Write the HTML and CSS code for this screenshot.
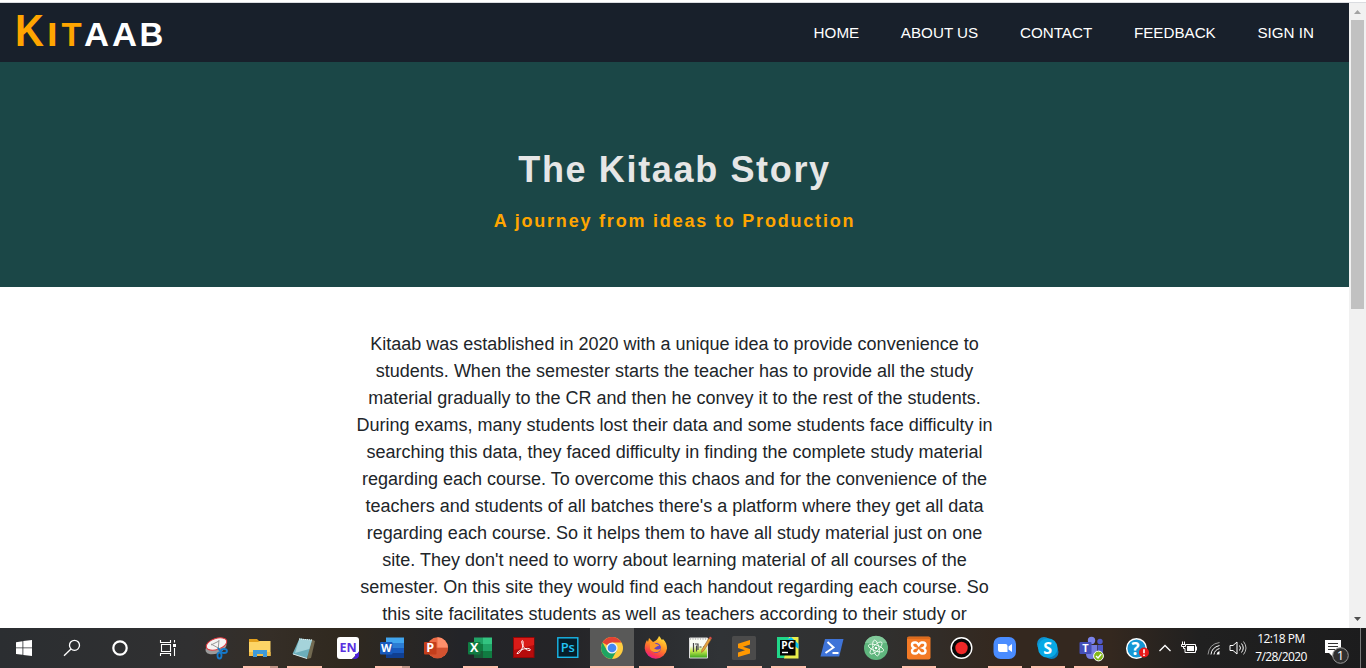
FILE: index.html
```html
<!DOCTYPE html>
<html lang="en">
<head>
<meta charset="utf-8">
<title>Kitaab</title>
<link rel="stylesheet" href="styles.css">
</head>
<body>
<div class="screen">
  <div class="window">
    <div class="page">
      <header class="navbar">
        <div class="logo"><span class="big gold">K</span><span class="gold l-i">I</span><span class="gold l-t">T</span><span>A</span><span>A</span><span class="l-b">B</span></div>
        <nav class="links"><a>HOME</a><a>ABOUT US</a><a>CONTACT</a><a>FEEDBACK</a><a>SIGN IN</a></nav>
      </header>
      <section class="hero">
        <h1>The Kitaab Story</h1>
        <h2>A journey from ideas to Production</h2>
      </section>
      <p class="story">Kitaab was established in 2020 with a unique idea to provide convenience to<br>students. When the semester starts the teacher has to provide all the study<br>material gradually to the CR and then he convey it to the rest of the students.<br>During exams, many students lost their data and some students face difficulty in<br>searching this data, they faced difficulty in finding the complete study material<br>regarding each course. To overcome this chaos and for the convenience of the<br>teachers and students of all batches there's a platform where they get all data<br>regarding each course. So it helps them to have all study material just on one<br>site. They don't need to worry about learning material of all courses of the<br>semester. On this site they would find each handout regarding each course. So<br>this site facilitates students as well as teachers according to their study or</p>
    </div>
    <div class="scrollbar">
      <svg width="17" height="17"><path d="M5 11h7L8.500 7z" fill="#a3a3a3"/></svg>
      <div class="thumb"></div>
      <svg class="down" width="17" height="17"><path d="M5 6h7l-3.500 4z" fill="#505050"/></svg>
    </div>
  </div>
  <footer class="taskbar">
    <div class="slot wide"><svg viewBox="0 0 28 28"><path d="M6 8.200l6.500-1v6.300H6zM13.300 7L22 6v7.500h-8.700zM6 14.300h6.500v6.500L6 19.900zM13.300 14.300H22V22l-8.700-1.100z" fill="#fff"/></svg></div>
    <div class="slot wide"><svg viewBox="0 0 28 28" fill="none" stroke="#fff" stroke-width="1.300"><circle cx="16.500" cy="11.300" r="5"/><path d="M13 15l-7 6.800"/></svg></div>
    <div class="slot wide"><svg viewBox="0 0 28 28"><circle cx="14" cy="14" r="6.700" fill="none" stroke="#fff" stroke-width="2.200"/></svg></div>
    <div class="slot wide"><svg viewBox="0 0 28 28" fill="none" stroke="#fff"><path d="M6.500 6v2.500h10V6M6.500 22v-2.500h10V22M7.500 10.500h9v7h-9zM20.500 6v2.500M20.500 14v8" stroke-width="1.100"/><path d="M19 10h3v3h-3z" fill="#fff" stroke="none"/></svg></div>

    <div class="slot"><svg viewBox="0 0 28 28"><ellipse cx="14" cy="13.500" rx="11" ry="6" transform="rotate(-20 14 13.500)" fill="#9b9b9b"/><ellipse cx="14.500" cy="10" rx="10.700" ry="5.500" transform="rotate(-18 14.500 10)" fill="#f6f4f4" stroke="#e23c43"/><path d="M9 10l11 6M17 6l-1 11M9 11l8-4" stroke="#999" fill="none"/><g fill="none" stroke="#1679c9" stroke-width="1.800"><path d="M16 14l3 4"/><ellipse cx="22" cy="17" rx="3" ry="2"/><ellipse cx="17.500" cy="21.500" rx="2" ry="3"/></g></svg></div>
    <div class="slot run more"><svg viewBox="0 0 28 28"><path d="M3 5h8l2 2h10.500v4H3z" fill="#e3a01d"/><path d="M3 8h9l2-1h10.500v15H3z" fill="#fdd466"/><path d="M3 18h21.500v4H3z" fill="#f4bd46"/><path d="M7 23v-7h14v7h-4v-3h-6v3z" fill="#409bda"/></svg></div>
    <div class="slot run"><svg viewBox="0 0 28 28"><path d="M21 5l4 2-4 17-4 1z" fill="#726a51"/><path d="M9.500 4.500L22 6l-5 18.500L2.500 20z" fill="#6caebb"/><path d="M9.500 4.500L22 6l-2.700 9L5 19z" fill="#a5d3da"/><path d="M9 5l13 1" stroke="#e6eeee" stroke-dasharray="1 1"/><path d="M3 20l14 4.500" stroke="#d9e7e8"/></svg></div>
    <div class="slot"><svg viewBox="0 0 28 28"><path d="M6 3h16q3 0 3 3v12l-7 7H6q-3 0-3-3V6q0-3 3-3z" fill="#fff"/><path d="M25 17v4q0 4-5 4h-2q4-2 3-5 3 0 4-3z" fill="#4d20d9"/><text x="14" y="18" text-anchor="middle" class="t en" fill="#5930df">EN</text></svg></div>
    <div class="slot run more"><svg viewBox="0 0 28 28"><path d="M8 3.500h18v5.500H8z" fill="#41a5ee"/><path d="M8 9h18v5H8z" fill="#2b7cd3"/><path d="M8 14h18v5H8z" fill="#185abd"/><path d="M8 19h18v5H8z" fill="#103f91"/><rect x="2" y="8" width="12.500" height="12.500" rx="1" fill="#185abd"/><text x="8.200" y="18" text-anchor="middle" class="t" fill="#fff">W</text></svg></div>
    <div class="slot"><svg viewBox="0 0 28 28"><circle cx="15.500" cy="13.800" r="10.500" fill="#ed6c47"/><path d="M15.500 3.300A10.500 10.500 0 0 1 26 13.800H15.500z" fill="#ff8f6b"/><path d="M26 13.800a10.500 10.500 0 0 1-21 0z" fill="#d35230"/><rect x="2" y="8" width="12.500" height="12.500" rx="1" fill="#c43e1c"/><text x="8.200" y="18.300" text-anchor="middle" class="t off" fill="#fff">P</text></svg></div>
    <div class="slot run"><svg viewBox="0 0 28 28"><path d="M8 3.500h9V10H8z" fill="#21a366"/><path d="M17 3.500h9V10h-9z" fill="#33c481"/><path d="M8 10h9v7H8z" fill="#107c41"/><path d="M17 10h9v7h-9z" fill="#21a366"/><path d="M8 17h18v7H8z" fill="#185c37"/><path d="M17 17h9v7h-9z" fill="#107c41"/><rect x="2" y="8" width="12.500" height="12.500" rx="1" fill="#107c41"/><text x="8.200" y="18.300" text-anchor="middle" class="t off" fill="#fff">X</text></svg></div>
    <div class="slot"><svg viewBox="0 0 28 28"><rect x="3.500" y="3.500" width="20.500" height="20" fill="#b50c0c" stroke="#920707"/><path d="M4 4h20v7L4 16z" fill="#d91b18"/><path d="M7 19.500c3 1 7-7 6-12-.500-2-2-.500-1 2 1 4 5 7.500 8 7 1.500-1-1-2.500-4-2-4 .500-8 2.500-9 5z" fill="none" stroke="#fff" stroke-width="1"/></svg></div>
    <div class="slot"><svg viewBox="0 0 28 28"><rect x="3.800" y="3.800" width="20" height="19.500" fill="#061e2a" stroke="#19b8ea" stroke-width="1.400"/><text x="13.800" y="18" text-anchor="middle" class="t ps" fill="#22c4f5">Ps</text></svg></div>
    <div class="slot run active"><svg viewBox="0 0 28 28"><circle cx="14" cy="14" r="11" fill="#ffcd40"/><path d="M14 14L4.500 8.500A11 11 0 0 1 23.500 8.500H14z" fill="#e34133"/><path d="M4.500 8.500A11 11 0 0 0 14 25l4.800-8.500H9z" fill="#1da462"/><circle cx="14" cy="14" r="5.600" fill="#f2f2f2"/><circle cx="14" cy="14" r="4.300" fill="#4587f3"/></svg></div>
    <div class="slot run"><svg viewBox="0 0 28 28"><defs><linearGradient id="fox" x1=".8" y1="0" x2=".3" y2="1"><stop offset="0" stop-color="#ffe83d"/><stop offset=".45" stop-color="#ff9223"/><stop offset=".8" stop-color="#f83d48"/><stop offset="1" stop-color="#e5189c"/></linearGradient></defs><path d="M17 2c2 2 2 3 3 4l1-1c3 3 4 6 4 9.500a11.200 11.200 0 0 1-22.300 0C2.700 10 4 8 5 6l1 2 1-4 4 4c3-1 5-3 6-6z" fill="url(#fox)"/><circle cx="14" cy="14" r="5" fill="#6644bd"/><path d="M8 9c3-1 5 0 6 1 2 0 3 1 3 2-3 0-3 2-5 2 2 2 5 2 7 0-1 5-8 6-11 1z" fill="#ff9a28"/></svg></div>
    <div class="slot"><svg viewBox="0 0 28 28"><defs><linearGradient id="npp" x2="0" y2="1"><stop offset=".4" stop-color="#f9fbf4"/><stop offset=".65" stop-color="#c5e94b"/><stop offset="1" stop-color="#34a31e"/></linearGradient></defs><path d="M3.500 4h18v20h-18z" fill="url(#npp)" stroke="#ddd"/><path d="M4 5h17" stroke="#999" stroke-dasharray="1 1.500"/><path d="M7.500 9v9M10.500 11.500v6M9 10h3v6M13.500 13h2M17 13h2" fill="none" stroke="#444" stroke-width="1.200"/><path d="M23 4l2 1.500-7 11-2.500 2 .500-3z" fill="#e6a33a" stroke="#9c612b" stroke-width=".6"/><path d="M23 4l1-1.500L26 4l-1 1.500z" fill="#d94d48"/></svg></div>
    <div class="slot run"><svg viewBox="0 0 28 28"><rect x="2" y="2" width="24" height="24" rx="1.500" fill="#4b4b4b"/><path d="M20 6v4.500l-7 2.300 7 2.200v4.500L8 23v-4.500l7-2.300L8 14V9.800z" fill="#ff9800"/></svg></div>
    <div class="slot run"><svg viewBox="0 0 28 28"><path d="M3 3h21v21H3z" fill="#21d789"/><path d="M15 3h9.500v21.500H10z" fill="#e9ed4b"/><path d="M17 3l7.500 7v5L13 6z" fill="#07c3f2"/><path d="M6 6h15.500v15.500H6z" fill="#050505"/><path d="M8 18.500h6" stroke="#fff" stroke-width="1.400"/><text x="13.700" y="14.800" text-anchor="middle" class="t pc" fill="#fff">PC</text></svg></div>
    <div class="slot"><svg viewBox="0 0 28 28"><path d="M7 5h18.500l-4.300 17.500H2.500z" fill="#3f74d8"/><path d="M9.500 8l6 5.500-8 5.500M14.500 19h6" fill="none" stroke="#fff" stroke-width="2"/></svg></div>
    <div class="slot"><svg viewBox="0 0 28 28"><circle cx="14" cy="14" r="12" fill="#5fb57d"/><path d="M3 9a12 12 0 0 1 22 0z" fill="#81c99a"/><g fill="none" stroke="#eefbef" stroke-width=".9"><ellipse cx="14" cy="14" rx="8" ry="3" transform="rotate(20 14 14)"/><ellipse cx="14" cy="14" rx="8" ry="3" transform="rotate(78 14 14)"/><ellipse cx="14" cy="14" rx="8" ry="3" transform="rotate(135 14 14)"/></g><circle cx="14" cy="14" r="1.300" fill="#fff"/></svg></div>

    <div class="slot slim run"><svg viewBox="0 0 28 28"><rect x="2" y="2.500" width="23.500" height="23" rx="2" fill="#f47a25"/><path d="M2 4h23.500" stroke="#c45c17"/><path d="M9.500 8.500H11q1 0 2.700 2.500 1.600-2.500 2.700-2.500H18q2.500 0 2.500 2.500 0 2-2.500 3 2.500 1 2.500 3 0 2.500-2.500 2.500h-1.500q-1 0-2.700-2.500-1.700 2.500-2.700 2.500H9.500Q7 19.500 7 17q0-2 2.500-3Q7 13 7 11q0-2.500 2.500-2.500z" fill="none" stroke="#fff" stroke-width="2.400"/></svg></div>
    <div class="slot slim"><svg viewBox="0 0 28 28"><circle cx="13.500" cy="14" r="10.300" fill="#080808" stroke="#fff" stroke-width="1.400"/><circle cx="13.500" cy="14" r="6.200" fill="#f02828"/></svg></div>
    <div class="slot slim run"><svg viewBox="0 0 28 28"><rect x="2.500" y="3" width="22.500" height="22" rx="7" fill="#4a8cff"/><path d="M7 10h7.500q2 0 2 2v6H9q-2 0-2-2zM17.500 12.500l3.500-2.500v8l-3.500-2.500z" fill="#fff"/></svg></div>
    <div class="slot slim run"><svg viewBox="0 0 28 28"><circle cx="10" cy="10" r="7" fill="#0f91cf"/><circle cx="17.500" cy="18" r="7" fill="#087fbe"/><circle cx="13.800" cy="14" r="9.800" fill="#08a9e5"/><text x="13.700" y="19.500" text-anchor="middle" class="t skype" fill="#fff">S</text></svg></div>
    <div class="slot slim run"><svg viewBox="0 0 28 28"><circle cx="14.500" cy="6.500" r="3.700" fill="#7b83eb"/><circle cx="23" cy="7.500" r="2.700" fill="#5059c9"/><path d="M9 11h11v9q-1 5-6 5t-5-5z" fill="#747bdf"/><path d="M20.500 11H26v7q-1 4-5.500 3z" fill="#4e57c6"/><rect x="2.500" y="8" width="12" height="12" rx="1" fill="#454fb8"/><text x="8.500" y="18" text-anchor="middle" class="t" fill="#fff">T</text><circle cx="21.500" cy="22" r="4.900" fill="#83b81a" stroke="#fff"/><path d="M19 22l2 2 3.300-4" fill="none" stroke="#fff" stroke-width="1.400"/></svg></div>

    <div class="tray">
      <svg class="help" viewBox="0 0 28 28"><circle cx="13.500" cy="14.500" r="9.800" fill="#1597d5" stroke="#fff" stroke-width="1.500"/><text x="12.500" y="21" text-anchor="middle" class="t q" fill="#fff">?</text><circle cx="21" cy="18.500" r="5" fill="#e81919"/><path d="M21 15.200v4M21 20.500v1.500" stroke="#fff" stroke-width="1.600"/></svg>
      <svg class="caret" width="14" height="28"><path d="M1.500 17l5.500-5.500 5.500 5.500" fill="none" stroke="#fff" stroke-width="1.300"/></svg>
      <svg class="battery" width="18" height="28" fill="none" stroke="#fff"><path d="M6 10.500h9.500v8H5v-4M16.500 12.500v4M2.500 7.500v3M4.500 7.500v3M1.500 10.500h4v2h-4zM3.500 12.500v2H5"/><path d="M7 12h7v5H7z" fill="#fff" stroke="none"/></svg>
      <svg class="wifi" width="15" height="28" fill="none" stroke="#fff"><path d="M1 20.500Q2 10 12.500 8.500" stroke="#999"/><path d="M4 20.500Q4.500 13.500 12.500 11.500M7 20.500Q7.500 16 12.500 14.500"/><path d="M9.500 20.500q.500-3 3-3.500v3.500z" fill="#fff" stroke="none"/></svg>
      <svg class="speaker" width="18" height="28" fill="none" stroke="#fff"><path d="M1 11.500h3l4-3.500v12l-4-3.500H1zM10.500 11.500q2 2.500 0 5M12.500 9.500q3.500 4.500 0 9"/><path d="M14.500 7.500q5 6.500 0 13" stroke="#bbb"/></svg>
      <div class="clock"><span>12:18 PM</span><span class="date">7/28/2020</span></div>
      <svg class="notify" width="28" height="40"><path d="M1 12h16v13H9v4l-4-4H1z" fill="#fff"/><path d="M4 15.500h10M4 18.500h10M4 21.500h7" stroke="#333"/><circle cx="16.500" cy="27.500" r="7.800" fill="#303030" stroke="#999"/><text x="16.500" y="32" text-anchor="middle" class="count" fill="#fff">1</text></svg>
      <div class="edge"></div>
    </div>
  </footer>
</div>
</body>
</html>
```
FILE: styles.css
```css
* { box-sizing: border-box; }
body { margin: 0; font-family: "Liberation Sans", Arial, sans-serif; background: #fff; overflow: hidden; }
svg { display: block; flex: none; }
.screen { width: 1366px; height: 668px; display: flex; flex-direction: column; }
.window { height: 628px; padding-top: 2px; display: flex; overflow: hidden; }
.page { width: 1349px; border-top: 1px solid #dadce0; }
.navbar { height: 59px; background: #18202b; display: flex; justify-content: space-between; padding: 0 35px 0 15px; }
.logo { display: flex; align-items: baseline; height: 59px; font-weight: bold; font-size: 33px; line-height: 57px; color: #fff; }
.logo span { display: block; width: 28px; transform: scaleX(1.05); transform-origin: 0 50%; }
.logo .gold { color: #ffa500; }
.logo .big { font-size: 43.5px; width: 32px; transform: scaleX(.92); }
.logo .l-i { width: 14.5px; transform: scaleX(1.15); }
.logo .l-t { width: 22px; transform: scaleX(1); }
.logo .l-b { width: 26px; transform: scaleX(1); }
.links { display: flex; gap: 41.7px; font-size: 15.2px; line-height: 59px; color: #fff; white-space: nowrap; }
.hero { height: 225px; background: #1b4747; text-align: center; padding-top: 87px; }
h1 { margin: 0; font-size: 36px; line-height: 42px; letter-spacing: 1.65px; color: #e6e6e6; }
h2 { margin: 18px 0 0; font-size: 18px; line-height: 24px; letter-spacing: 1.8px; color: #ffa500; }
.story { margin: 44px 0 0; font-size: 18px; line-height: 27px; text-align: center; white-space: nowrap; color: #212529; }
.scrollbar { width: 17px; background: #f1f1f1; border-top: 1px solid #dadce0; display: flex; flex-direction: column; }
.thumb { width: 13px; height: 289px; margin: 0 2px; background: #c1c1c1; }
.scrollbar .down { margin-top: auto; }
.taskbar { height: 40px; display: flex; background: linear-gradient(90deg, #2b2e31 0, #303031 190px, #352e27 270px, #30291f 340px, #232428 460px, #242427 560px, #303336 720px, #30302f 880px, #34281f 1000px, #34281f 1110px, #202020 1200px, #1c1c1d 1366px); }
.slot { width: 44px; height: 40px; padding: 6px 8px 4px; display: flex; flex-direction: column; gap: 4px; }
.slot svg { width: 28px; height: 28px; }
.wide { width: 48px; padding: 6px 10px 4px; }
.wide + .slot:not(.wide) { margin-left: 2px; }
.slim { width: 43px; padding: 6px 8px 4px 7px; }
.run { padding-bottom: 0; }
.run::after { content: ""; height: 2px; width: 35px; margin-left: -3px; background: #ffc1ae; flex: none; }
.more::after { background: linear-gradient(90deg, #ffc1ae 27px, #c29587 27px); }
.slim::after { width: 34px; }
.active { background: #595958; }
.active::after { width: 44px; margin-left: -8px; }
.t { font: bold 11px "Open Sans", sans-serif; }
.off { font-size: 12.5px; }
.en { font-size: 12.5px; }
.ps { font-size: 13px; font-weight: 600; }
.pc { font-size: 10px; }
.skype { font-size: 16px; }
.q { font-size: 17px; }
.tray { flex: 1; display: flex; align-items: center; color: #fff; padding-left: 10px; }
.help { width: 28px; height: 28px; }
.caret { margin-left: 7px; }
.battery { margin-left: 8px; }
.wifi { margin-left: 9px; }
.speaker { margin-left: 7px; }
.clock { width: 60px; margin-left: 4px; display: flex; flex-direction: column; align-items: center; font: 12px/18px "Open Sans", sans-serif; letter-spacing: -.5px; }
.date { letter-spacing: -.6px; }
.notify { margin-left: 13px; }
.count { font: 13px "Open Sans", sans-serif; }
.edge { width: 1px; height: 40px; margin-left: 8px; background: #777; }
```
